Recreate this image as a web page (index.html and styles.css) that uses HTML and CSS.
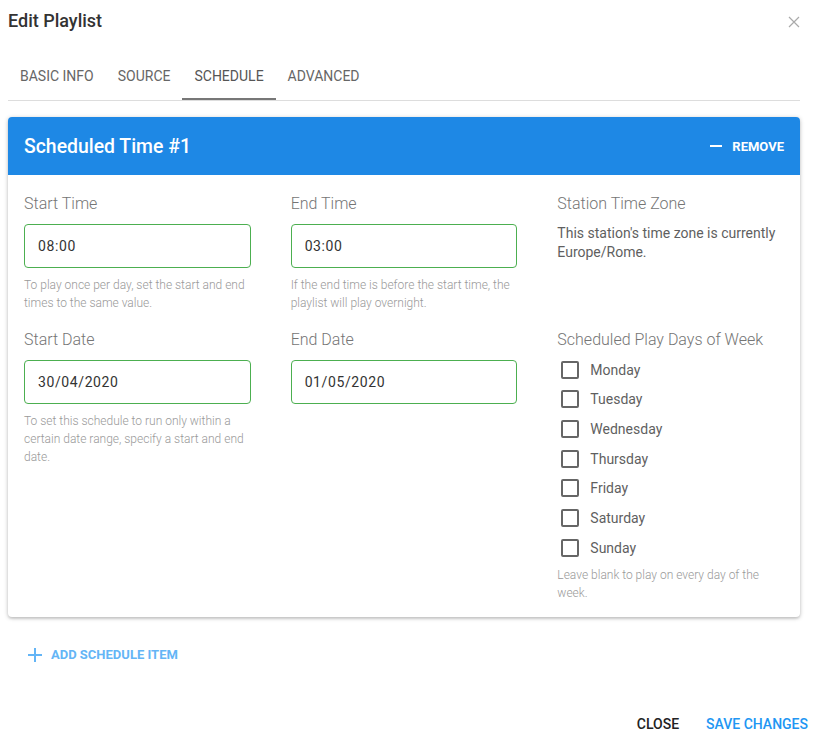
FILE: index.html
```html
<!DOCTYPE html>
<html lang="en">
<head>
  <meta charset="UTF-8" />
  <meta name="viewport" content="width=device-width, initial-scale=1.0" />
  <title>Edit Playlist</title>
  <link rel="stylesheet" href="styles.css">
</head>
<body>
  <div class="dialog">
    <div class="dialog-header">
      <h1>Edit Playlist</h1>
      <button class="close-x" aria-label="Close">
        <svg width="12" height="12" viewBox="0 0 12 12"><path d="M1 1L11 11M11 1L1 11" stroke="#aaa" stroke-width="1.2" fill="none"/></svg>
      </button>
    </div>

    <div class="tabs">
      <div class="tab">Basic Info</div>
      <div class="tab">Source</div>
      <div class="tab active">Schedule</div>
      <div class="tab">Advanced</div>
    </div>

    <div class="card">
      <div class="card-header">
        <h2>Scheduled Time #1</h2>
        <button class="remove">
          <svg width="12" height="12" viewBox="0 0 12 12"><path d="M0 6H12" stroke="#fff" stroke-width="2"/></svg>
          Remove
        </button>
      </div>
      <div class="card-body">
        <div class="field">
          <label>Start Time</label>
          <input type="text" value="08:00" />
          <p class="hint">To play once per day, set the start and end times to the same value.</p>
        </div>
        <div class="field">
          <label>End Time</label>
          <input type="text" value="03:00" />
          <p class="hint">If the end time is before the start time, the playlist will play overnight.</p>
        </div>
        <div class="field">
          <label>Station Time Zone</label>
          <p class="text">This station's time zone is currently Europe/Rome.</p>
        </div>

        <div class="field">
          <label>Start Date</label>
          <input type="text" value="30/04/2020" />
          <p class="hint">To set this schedule to run only within a certain date range, specify a start and end date.</p>
        </div>
        <div class="field">
          <label>End Date</label>
          <input type="text" value="01/05/2020" />
        </div>
        <div class="field">
          <label>Scheduled Play Days of Week</label>
          <div class="days">
            <div class="day"><span class="box"></span>Monday</div>
            <div class="day"><span class="box"></span>Tuesday</div>
            <div class="day"><span class="box"></span>Wednesday</div>
            <div class="day"><span class="box"></span>Thursday</div>
            <div class="day"><span class="box"></span>Friday</div>
            <div class="day"><span class="box"></span>Saturday</div>
            <div class="day"><span class="box"></span>Sunday</div>
          </div>
          <p class="hint">Leave blank to play on every day of the week.</p>
        </div>
      </div>
    </div>

    <button class="add-item">
      <svg width="14" height="14" viewBox="0 0 14 14"><path d="M7 0V14M0 7H14" stroke="#64b5f6" stroke-width="2"/></svg>
      Add Schedule Item
    </button>

    <div class="dialog-footer">
      <button class="btn">Close</button>
      <button class="btn primary">Save Changes</button>
    </div>
  </div>
</body>
</html>
```

FILE: styles.css
```css
body {
  margin: 0;
  font-family: Roboto, "Liberation Sans", Arial, sans-serif;
  background: #fff;
  color: #333;
}
button {
  font-family: inherit;
  background: none;
  border: none;
  cursor: pointer;
  padding: 0;
}
.dialog {
  padding: 0 0 0 8px;
  width: 812px;
}
.dialog-header {
  display: flex;
  align-items: center;
  justify-content: space-between;
  height: 40px;
  padding-right: 20px;
}
.dialog-header h1 {
  margin: 0;
  font-size: 18px;
  font-weight: 500;
  color: #333;
}
.close-x {
  display: flex;
  margin-top: 4px;
}
.tabs {
  display: flex;
  margin-top: 12px;
  width: 792px;
  border-bottom: 1px solid #ddd;
}
.tab {
  height: 48px;
  line-height: 49px;
  padding: 0 12px;
  font-size: 14px;
  font-weight: 400;
  text-transform: uppercase;
  color: #666;
  box-sizing: border-box;
}
.tab.active {
  color: #555;
  border-bottom: 2px solid #777;
  margin-bottom: -1px;
}
.card {
  width: 792px;
  margin-top: 16px;
  border-radius: 4px;
  overflow: hidden;
  box-shadow: 0 1px 4px rgba(0,0,0,0.25), 0 2px 2px rgba(0,0,0,0.08);
}
.card-header {
  background-color: #1e88e5;
  height: 58px;
  display: flex;
  align-items: center;
  justify-content: space-between;
  padding: 0 16px;
}
.card-header h2 {
  margin: 0;
  color: #fff;
  font-size: 19.4px;
  font-weight: 500;
}
.remove {
  display: flex;
  align-items: center;
  gap: 10px;
  color: #fff;
  font-size: 13px;
  font-weight: 700;
  text-transform: uppercase;
}
.card-body {
  display: grid;
  grid-template-columns: repeat(3, 1fr);
  column-gap: 40px;
  row-gap: 16px;
  padding: 17px 16px 15px;
}
.field label {
  display: block;
  font-size: 16px;
  font-weight: 300;
  line-height: 24px;
  color: #757575;
  margin-bottom: 8px;
}
.field input {
  display: block;
  width: 100%;
  box-sizing: border-box;
  height: 44px;
  padding: 0 13px;
  border: 1px solid #4caf50;
  border-radius: 4px;
  font-family: inherit;
  font-size: 14px;
  letter-spacing: 0.6px;
  color: #333;
  outline: none;
}
.hint {
  margin: 8px 0 0;
  font-size: 12px;
  font-weight: 300;
  line-height: 18px;
  color: #999;
}
.text {
  margin: 0;
  font-size: 14px;
  line-height: 19px;
  color: #5f5f5f;
}
.days {
  margin-top: -5px;
}
.day {
  display: flex;
  align-items: center;
  height: 29.67px;
  font-size: 14px;
  color: #5f5f5f;
}
.day .box {
  width: 14px;
  height: 14px;
  border: 2px solid #666;
  border-radius: 2px;
  margin: 0 11px 0 4px;
}
.days + .hint {
  margin-top: 3px;
}
.add-item {
  display: flex;
  align-items: center;
  gap: 9px;
  height: 36px;
  margin-top: 20px;
  padding-left: 20px;
  color: #64b5f6;
  font-size: 13px;
  font-weight: 700;
  text-transform: uppercase;
}
.dialog-footer {
  display: flex;
  justify-content: flex-end;
  gap: 11px;
  margin-top: 33px;
  padding-right: 4px;
}
.btn {
  height: 36px;
  padding: 0 8px;
  font-size: 14px;
  font-weight: 500;
  text-transform: uppercase;
  color: #222;
}
.btn.primary {
  color: #2196f3;
}
```
